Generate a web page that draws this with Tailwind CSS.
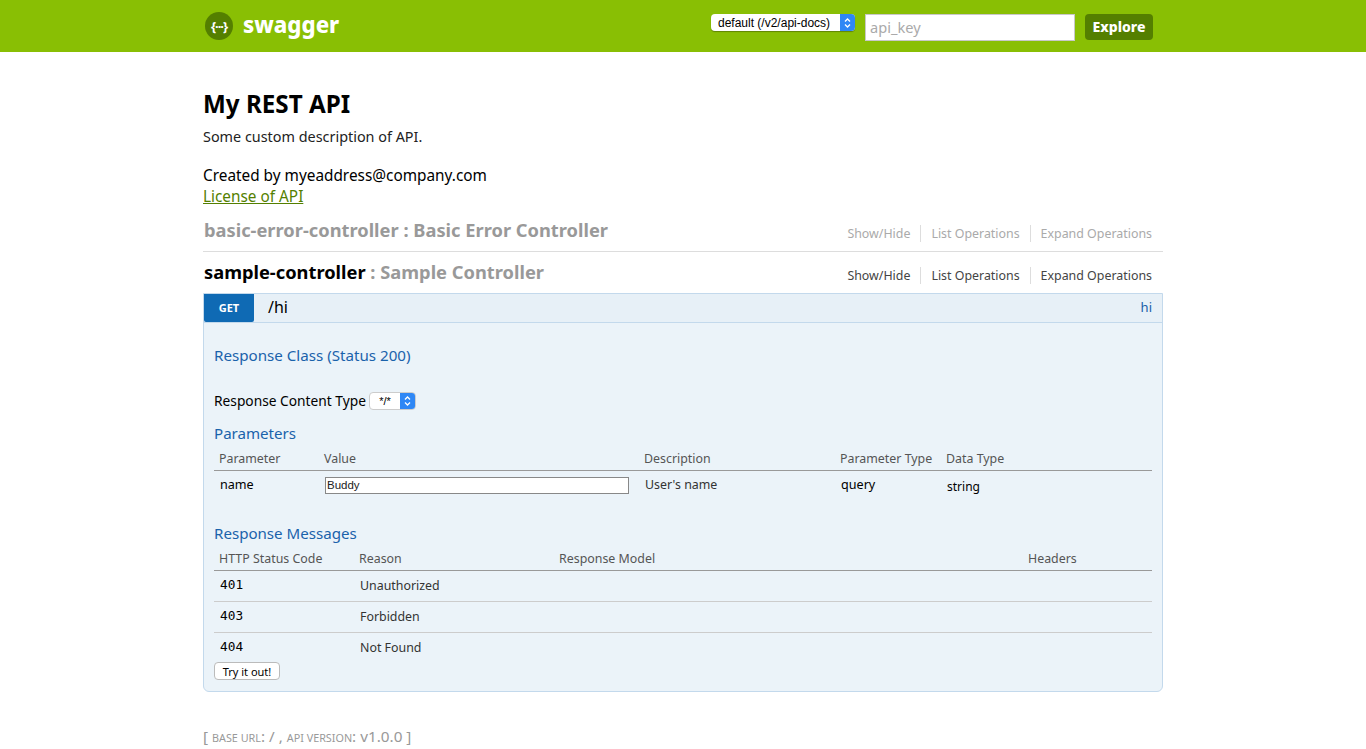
<!DOCTYPE html>
<html lang="en">
<head>
    <meta charset="UTF-8">
    <title>Swagger UI</title>
    <script src="https://cdn.jsdelivr.net/npm/@tailwindcss/browser@4"></script>
</head>
<body class="bg-white text-black font-['Noto_Sans','Open_Sans',sans-serif] h-[749px] overflow-hidden">
    <!-- header -->
    <div class="h-[52px] bg-[#89bf04]">
        <div class="w-[960px] ml-[203px] h-full flex items-center">
            <div class="w-[28px] h-[28px] ml-[2px] rounded-full bg-[#547f00] flex items-center justify-center text-white text-[13px] tracking-[-1px] font-bold leading-none">{···}</div>
            <span class="ml-[10px] text-white text-[22.2px] font-extrabold leading-none -mt-[1px]">swagger</span>
            <div class="ml-auto flex items-start self-start pt-[14px] pr-[10px]">
                <div class="w-[144px] h-[17px] rounded-[4px] bg-white flex items-center shadow-[0_1px_1px_rgba(0,0,0,0.3)] mr-[10px] overflow-hidden">
                    <span class="flex-1 pl-[7px] text-[12px] leading-none font-['Liberation_Sans',sans-serif]">default (/v2/api-docs)</span>
                    <span class="w-[15px] h-full bg-[#2f87f5] flex items-center justify-center">
                        <svg width="7" height="12" viewBox="0 0 7 12" fill="none" stroke="white" stroke-width="1.3"><path d="M1 4.5L3.5 2L6 4.5M1 7.5L3.5 10L6 7.5"/></svg>
                    </span>
                </div>
                <div class="w-[210px] h-[27px] bg-white border border-[#c8c8c8] mr-[10px] pl-[4px] flex items-center text-[14.6px] text-[#aaaaaa]">api_key</div>
                <div class="w-[68px] h-[26px] rounded-[4px] bg-[#547f00] text-white text-[14px] font-extrabold flex items-center justify-center"><span class="-mt-[1px]">Explore</span></div>
            </div>
        </div>
    </div>

    <div class="w-[960px] ml-[203px]">
        <!-- info -->
        <h1 class="mt-[35px] text-[24.2px] font-bold leading-[34px]">My REST API</h1>
        <p class="mt-[6px] text-[14.4px] leading-[20px] text-[#222222]">Some custom description of API.</p>
        <p class="mt-[18px] text-[15.35px] leading-[21px]">Created by myeaddress@company.com</p>
        <a class="block text-[15.35px] leading-[21px] text-[#547f00] underline">License of API</a>

        <!-- controllers -->
        <div class="mt-[4px] h-[41px] border-b border-[#dddddd] flex items-center justify-between pb-[1px]">
            <div class="pl-[1px] text-[18.3px] font-bold text-[#999999] leading-none">basic-error-controller : Basic Error Controller</div>
            <div class="flex text-[12.4px] text-[#aaaaaa] leading-[17px] pr-[11px] mt-[6px]">
                <span class="pr-[10px] border-r border-[#dddddd]">Show/Hide</span>
                <span class="px-[10px] border-r border-[#dddddd]">List Operations</span>
                <span class="pl-[10px]">Expand Operations</span>
            </div>
        </div>
        <div class="h-[41px] flex items-center justify-between">
            <div class="pl-[1px] text-[18.3px] font-bold text-[#999999] leading-none -mt-[1px]"><span class="text-black">sample-controller</span> : Sample Controller</div>
            <div class="flex text-[12.4px] text-[#444444] leading-[17px] pr-[11px] mt-[5px]">
                <span class="pr-[10px] border-r border-[#dddddd]">Show/Hide</span>
                <span class="px-[10px] border-r border-[#dddddd]">List Operations</span>
                <span class="pl-[10px]">Expand Operations</span>
            </div>
        </div>

        <!-- GET /hi -->
        <div class="h-[399px] bg-[#ebf3f9] border border-[#c3d9ec] rounded-b-[6px] flex flex-col">
            <div class="h-[29px] bg-[#e7f0f7] border-b border-[#c3d9ec] flex items-center">
                <span class="w-[50px] h-full rounded-b-[2px] bg-[#0f6ab4] text-white text-[11px] font-bold flex items-center justify-center">GET</span>
                <span class="ml-[14px] text-[16px] leading-none -mt-[2px]">/hi</span>
                <span class="ml-auto pr-[10px] text-[13px] text-[#1a5fa8]">hi</span>
            </div>
            <div class="pl-[10px] pr-[10px] flex-1">
                <h4 class="mt-[21px] text-[15.15px] leading-[22px] text-[#1a62ab]">Response Class (Status 200)</h4>
                <div class="mt-[24px] h-[22px] flex items-center text-[13.75px]">
                    <span>Response Content Type</span>
                    <span class="ml-[3px] w-[47px] h-[18px] rounded-[4px] bg-white border border-[#cccccc] flex items-center overflow-hidden">
                        <span class="flex-1 text-center text-[11px] leading-none font-['Liberation_Sans',sans-serif]">*/*</span>
                        <span class="w-[15px] h-full bg-[#2f87f5] flex items-center justify-center">
                            <svg width="7" height="12" viewBox="0 0 7 12" fill="none" stroke="white" stroke-width="1.3"><path d="M1 4.5L3.5 2L6 4.5M1 7.5L3.5 10L6 7.5"/></svg>
                        </span>
                    </span>
                </div>

                <h4 class="mt-[10px] text-[15.1px] leading-[22px] text-[#1a62ab]">Parameters</h4>
                <div class="mt-[3px] h-[24px] pt-[2px] grid grid-cols-[105px_320px_196px_106px_1fr] items-center border-b border-[#999999] text-[12.4px] text-[#555555] pl-[5px]">
                    <span>Parameter</span><span>Value</span><span>Description</span><span>Parameter Type</span><span>Data Type</span>
                </div>
                <div class="h-[29px] grid grid-cols-[105px_320px_196px_106px_1fr] items-center text-[12.6px] pl-[6px]">
                    <span class="-mt-[1px]">name</span>
                    <span class="w-[304px] h-[17px] bg-white border border-[#888888] pl-[1px] flex items-center text-[11.5px] text-[#222222] font-['Liberation_Sans',sans-serif]">Buddy</span>
                    <span class="text-[12.4px] text-[#333333]">User's name</span>
                    <span>query</span>
                    <span class="text-[12px] mt-[2px]">string</span>
                </div>

                <h4 class="mt-[22px] text-[15.1px] leading-[22px] text-[#1a62ab]">Response Messages</h4>
                <div class="mt-[3px] h-[24px] pt-[2px] grid grid-cols-[140px_200px_469px_1fr] items-center border-b border-[#999999] text-[12.4px] text-[#555555] pl-[5px]">
                    <span>HTTP Status Code</span><span>Reason</span><span>Response Model</span><span>Headers</span>
                </div>
                <div class="h-[31px] grid grid-cols-[140px_1fr] items-center border-b border-[#cccccc] text-[12.4px] pl-[6px]">
                    <span class="font-['DejaVu_Sans_Mono',monospace] text-[12.8px] -mt-[3px]">401</span><span class="text-[#333333]">Unauthorized</span>
                </div>
                <div class="h-[31px] grid grid-cols-[140px_1fr] items-center border-b border-[#cccccc] text-[12.4px] pl-[6px]">
                    <span class="font-['DejaVu_Sans_Mono',monospace] text-[12.8px] -mt-[3px]">403</span><span class="text-[#333333]">Forbidden</span>
                </div>
                <div class="h-[30px] grid grid-cols-[140px_1fr] items-center text-[12.4px] pl-[6px]">
                    <span class="font-['DejaVu_Sans_Mono',monospace] text-[12.8px] -mt-[3px]">404</span><span class="text-[#333333]">Not Found</span>
                </div>
                <div class="w-[66px] h-[18px] -mt-[1px] bg-white border border-[#bbbbbb] rounded-[4px] flex items-center justify-center text-[11px] leading-none">Try it out!</div>
            </div>
        </div>

        <!-- footer -->
        <div class="mt-[32px] text-[15.3px] leading-[24px] text-[#999999]">[ <span class="text-[10.8px] uppercase">base url</span>: / , <span class="text-[10.8px] uppercase">api version</span>: v1.0.0 ]</div>
    </div>
</body>
</html>
